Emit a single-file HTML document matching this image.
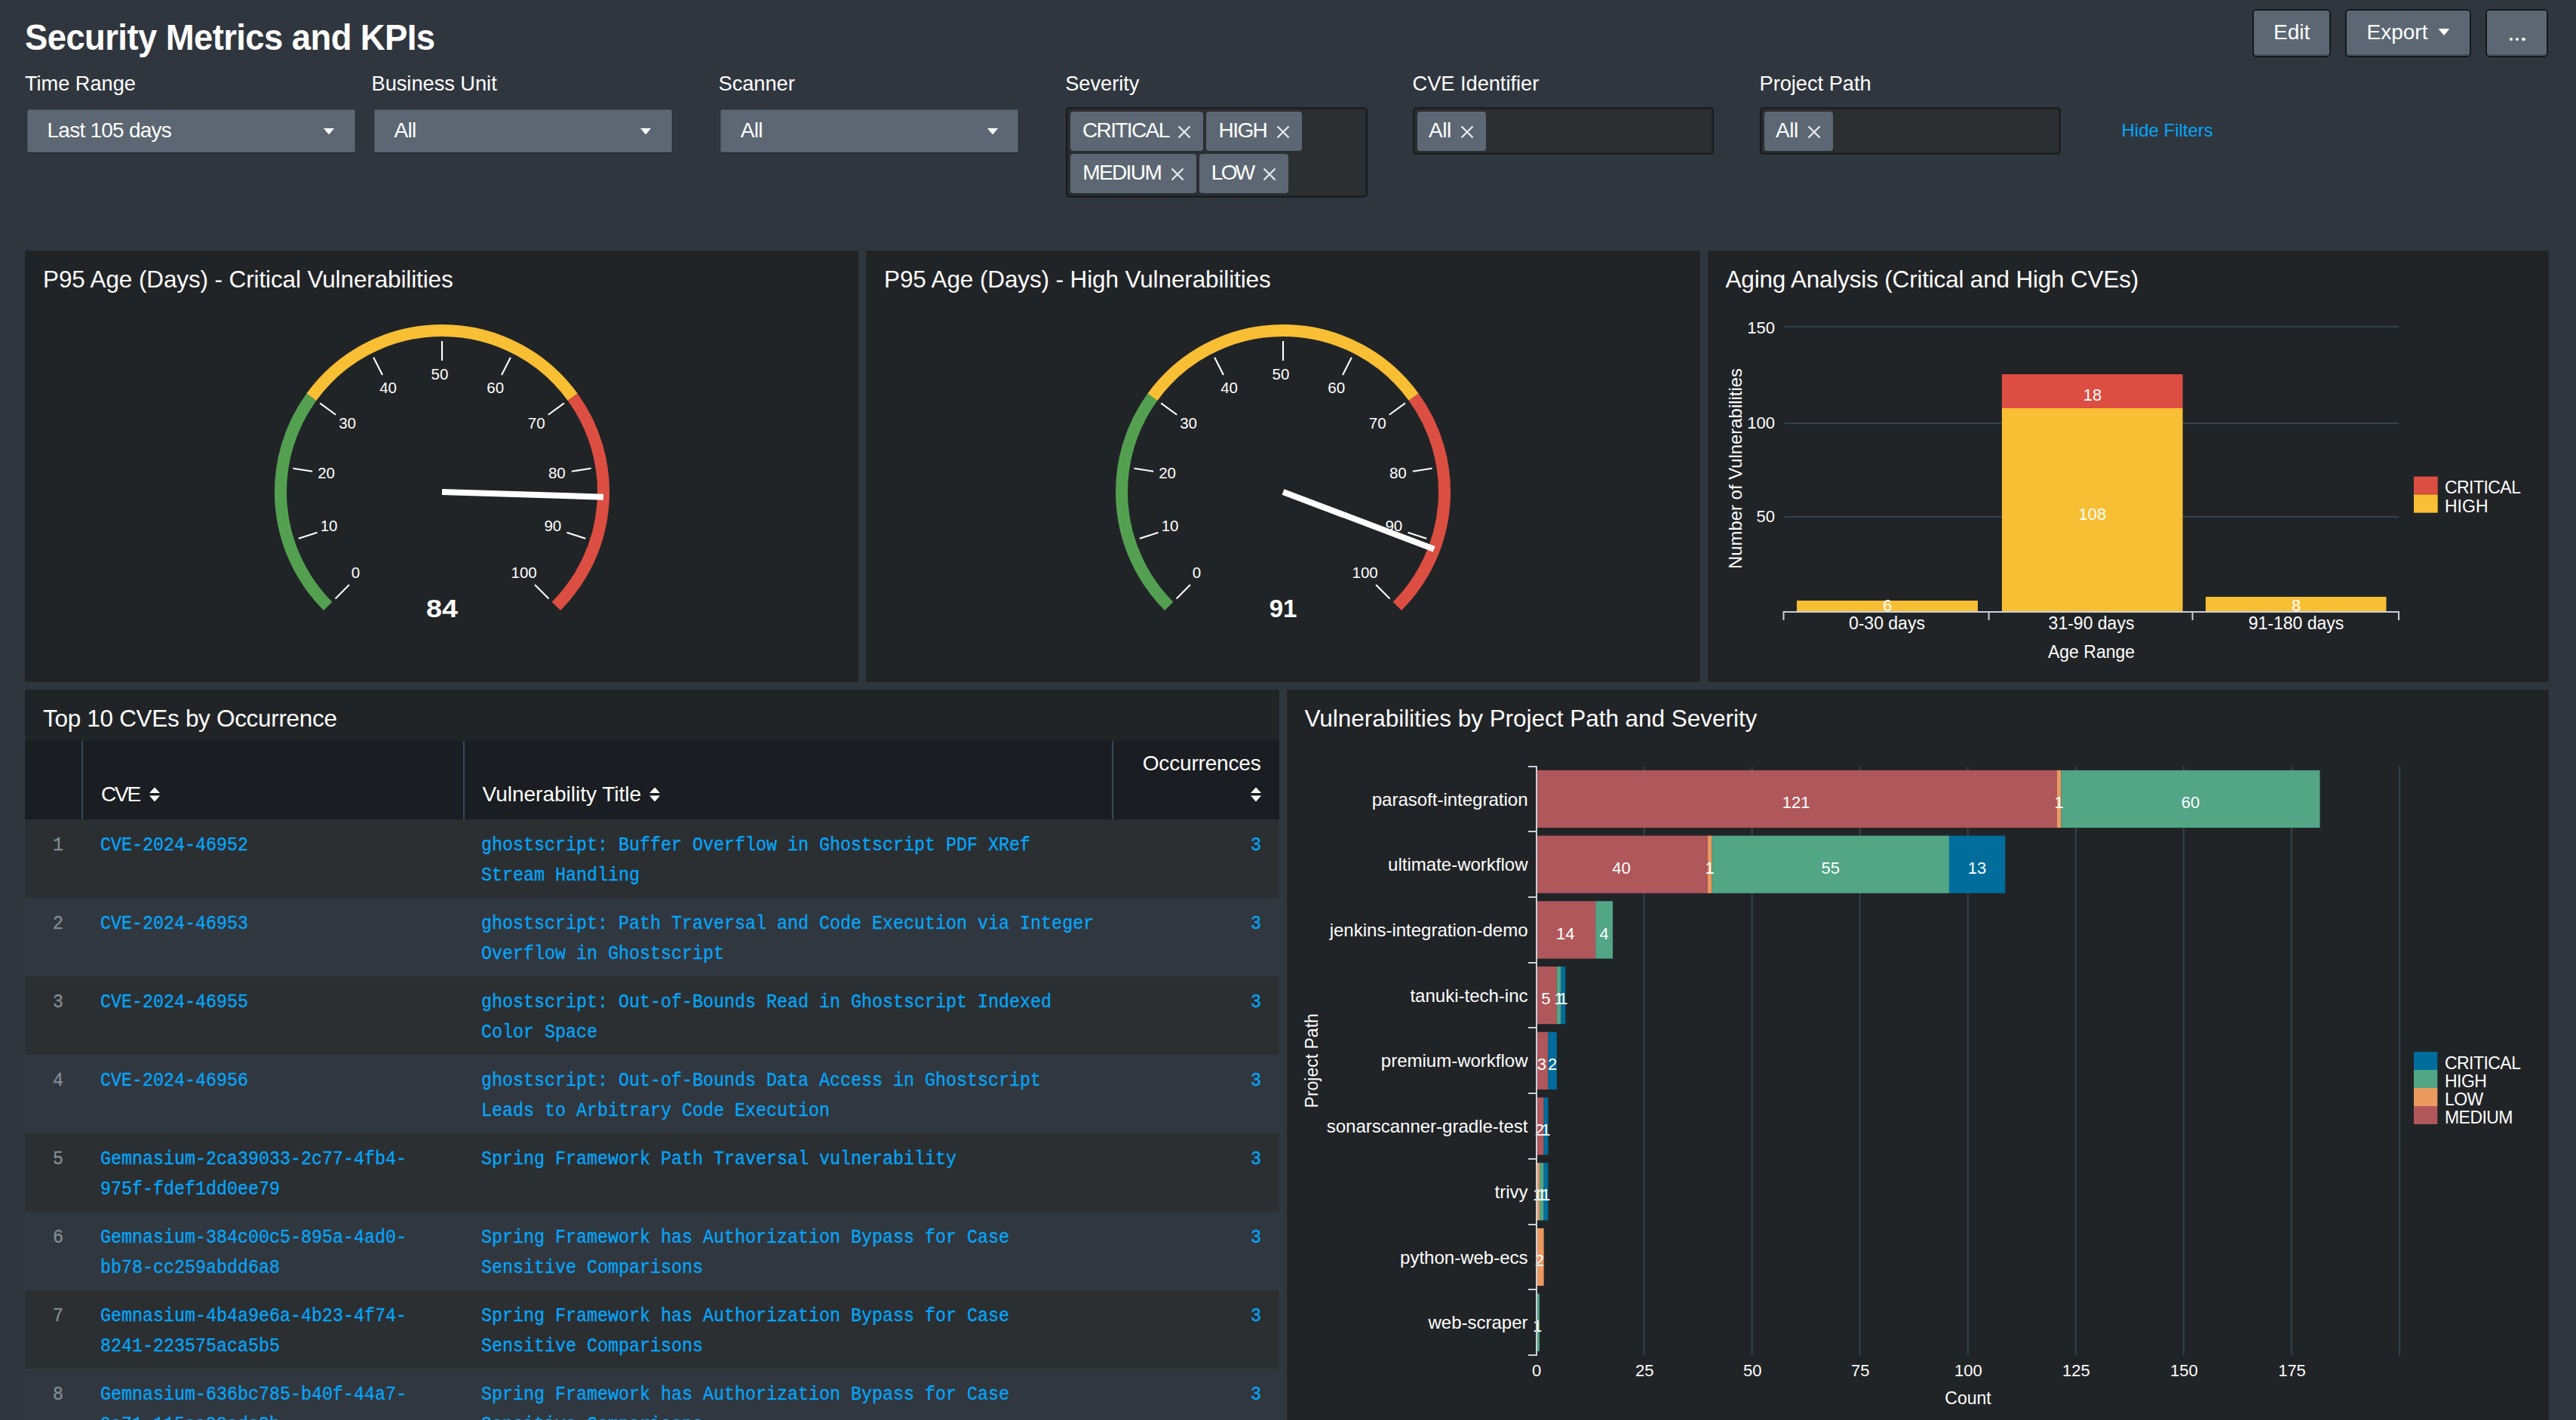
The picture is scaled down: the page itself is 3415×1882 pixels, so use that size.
<!DOCTYPE html>
<html><head><meta charset="utf-8"><title>Security Metrics and KPIs</title>
<style>
html,body{margin:0;padding:0;}
body{width:3415px;height:1882px;overflow:hidden;background:#30363e;position:relative;font-family:'Liberation Sans', sans-serif;}
</style></head><body>
<div style="position:absolute;left:32.50px;top:25.96px;font-family:'Liberation Sans', sans-serif;font-size:48px;line-height:48px;font-weight:700;color:#ffffff;letter-spacing:-0.6px;white-space:nowrap;transform:scaleX(0.946);transform-origin:0 0;">Security Metrics and KPIs</div><div style="position:absolute;left:2986.00px;top:12.00px;width:104.00px;height:63.50px;background:#5c6773;border-radius:5px;box-shadow:inset 0 0 0 2px #16191d, inset 0 -4px 0 0 #474e57;"></div><div style="position:absolute;left:3038.20px;top:28.59px;font-family:'Liberation Sans', sans-serif;font-size:28px;line-height:28px;font-weight:400;color:#ffffff;letter-spacing:0px;white-space:nowrap;transform:translateX(-50%) scaleX(1.0);transform-origin:0 0;">Edit</div><div style="position:absolute;left:3108.60px;top:12.00px;width:167.40px;height:63.50px;background:#5c6773;border-radius:5px;box-shadow:inset 0 0 0 2px #16191d, inset 0 -4px 0 0 #474e57;"></div><div style="position:absolute;left:3137.50px;top:28.59px;font-family:'Liberation Sans', sans-serif;font-size:28px;line-height:28px;font-weight:400;color:#ffffff;letter-spacing:0px;white-space:nowrap;">Export</div><svg style="position:absolute;left:3230px;top:36px" width="20" height="14"><path d="M2.6 2 L17.3 2 L10.7 10.3 Q9.95 11.2 9.2 10.3 Z" fill="#fff"/></svg><div style="position:absolute;left:3294.50px;top:12.00px;width:83.80px;height:63.50px;background:#5c6773;border-radius:5px;box-shadow:inset 0 0 0 2px #16191d, inset 0 -4px 0 0 #474e57;"></div><div style="position:absolute;left:3326.50px;top:49.8px;width:4.6px;height:4.6px;border-radius:50%;background:#fff"></div><div style="position:absolute;left:3334.80px;top:49.8px;width:4.6px;height:4.6px;border-radius:50%;background:#fff"></div><div style="position:absolute;left:3343.20px;top:49.8px;width:4.6px;height:4.6px;border-radius:50%;background:#fff"></div><div style="position:absolute;left:32.90px;top:97.27px;font-family:'Liberation Sans', sans-serif;font-size:27.2px;line-height:27.2px;font-weight:400;color:#ffffff;letter-spacing:0px;white-space:nowrap;">Time Range</div><div style="position:absolute;left:492.50px;top:97.27px;font-family:'Liberation Sans', sans-serif;font-size:27.2px;line-height:27.2px;font-weight:400;color:#ffffff;letter-spacing:0px;white-space:nowrap;">Business Unit</div><div style="position:absolute;left:952.50px;top:97.27px;font-family:'Liberation Sans', sans-serif;font-size:27.2px;line-height:27.2px;font-weight:400;color:#ffffff;letter-spacing:0px;white-space:nowrap;">Scanner</div><div style="position:absolute;left:1412.20px;top:97.27px;font-family:'Liberation Sans', sans-serif;font-size:27.2px;line-height:27.2px;font-weight:400;color:#ffffff;letter-spacing:0px;white-space:nowrap;">Severity</div><div style="position:absolute;left:1872.50px;top:97.27px;font-family:'Liberation Sans', sans-serif;font-size:27.2px;line-height:27.2px;font-weight:400;color:#ffffff;letter-spacing:0px;white-space:nowrap;">CVE Identifier</div><div style="position:absolute;left:2332.50px;top:97.27px;font-family:'Liberation Sans', sans-serif;font-size:27.2px;line-height:27.2px;font-weight:400;color:#ffffff;letter-spacing:0px;white-space:nowrap;">Project Path</div><div style="position:absolute;left:35.00px;top:144.00px;width:436.50px;height:60.00px;background:#5c6773;border-radius:4px;box-shadow:inset 0 0 0 1.3px #2b3036, inset 0 -2.2px 0 0 #2b3036;"></div><div style="position:absolute;left:62.50px;top:158.89px;font-family:'Liberation Sans', sans-serif;font-size:28px;line-height:28px;font-weight:400;color:#ffffff;letter-spacing:-0.75px;white-space:nowrap;">Last 105 days</div><svg style="position:absolute;left:426.50px;top:168px" width="18" height="13"><path d="M2 2 L16 2 L9.8 9.6 Q9 10.5 8.2 9.6 Z" fill="#fff"/></svg><div style="position:absolute;left:495.00px;top:144.00px;width:396.70px;height:60.00px;background:#5c6773;border-radius:4px;box-shadow:inset 0 0 0 1.3px #2b3036, inset 0 -2.2px 0 0 #2b3036;"></div><div style="position:absolute;left:522.50px;top:158.89px;font-family:'Liberation Sans', sans-serif;font-size:28px;line-height:28px;font-weight:400;color:#ffffff;letter-spacing:-0.75px;white-space:nowrap;">All</div><svg style="position:absolute;left:846.70px;top:168px" width="18" height="13"><path d="M2 2 L16 2 L9.8 9.6 Q9 10.5 8.2 9.6 Z" fill="#fff"/></svg><div style="position:absolute;left:954.30px;top:144.00px;width:397.20px;height:60.00px;background:#5c6773;border-radius:4px;box-shadow:inset 0 0 0 1.3px #2b3036, inset 0 -2.2px 0 0 #2b3036;"></div><div style="position:absolute;left:981.80px;top:158.89px;font-family:'Liberation Sans', sans-serif;font-size:28px;line-height:28px;font-weight:400;color:#ffffff;letter-spacing:-0.75px;white-space:nowrap;">All</div><svg style="position:absolute;left:1306.50px;top:168px" width="18" height="13"><path d="M2 2 L16 2 L9.8 9.6 Q9 10.5 8.2 9.6 Z" fill="#fff"/></svg><div style="position:absolute;left:1413.20px;top:142.40px;width:400.10px;height:119.60px;background:#2b2f32;border-radius:5px;box-shadow:0 0 0 2.5px #1a1d20 inset;"></div><div style="position:absolute;left:1419.00px;top:148.10px;width:176.00px;height:51.60px;background:#5c6773;border-radius:4px;"></div><div style="position:absolute;left:1434.90px;top:158.59px;font-family:'Liberation Sans', sans-serif;font-size:28px;line-height:28px;font-weight:400;color:#ffffff;letter-spacing:-1.6px;white-space:nowrap;">CRITICAL</div><svg style="position:absolute;left:1561.40px;top:165.90px" width="18" height="18"><path d="M1.5 1.5 L16.5 16.5 M16.5 1.5 L1.5 16.5" stroke="#e3e7ea" stroke-width="2.4"/></svg><div style="position:absolute;left:1599.00px;top:148.10px;width:126.70px;height:51.60px;background:#5c6773;border-radius:4px;"></div><div style="position:absolute;left:1615.60px;top:158.59px;font-family:'Liberation Sans', sans-serif;font-size:28px;line-height:28px;font-weight:400;color:#ffffff;letter-spacing:-1.6px;white-space:nowrap;">HIGH</div><svg style="position:absolute;left:1692.00px;top:165.90px" width="18" height="18"><path d="M1.5 1.5 L16.5 16.5 M16.5 1.5 L1.5 16.5" stroke="#e3e7ea" stroke-width="2.4"/></svg><div style="position:absolute;left:1419.00px;top:204.10px;width:166.80px;height:51.60px;background:#5c6773;border-radius:4px;"></div><div style="position:absolute;left:1435.20px;top:214.59px;font-family:'Liberation Sans', sans-serif;font-size:28px;line-height:28px;font-weight:400;color:#ffffff;letter-spacing:-1.6px;white-space:nowrap;">MEDIUM</div><svg style="position:absolute;left:1552.40px;top:221.90px" width="18" height="18"><path d="M1.5 1.5 L16.5 16.5 M16.5 1.5 L1.5 16.5" stroke="#e3e7ea" stroke-width="2.4"/></svg><div style="position:absolute;left:1590.00px;top:204.10px;width:118.00px;height:51.60px;background:#5c6773;border-radius:4px;"></div><div style="position:absolute;left:1605.70px;top:214.59px;font-family:'Liberation Sans', sans-serif;font-size:28px;line-height:28px;font-weight:400;color:#ffffff;letter-spacing:-2.6px;white-space:nowrap;">LOW</div><svg style="position:absolute;left:1674.00px;top:221.90px" width="18" height="18"><path d="M1.5 1.5 L16.5 16.5 M16.5 1.5 L1.5 16.5" stroke="#e3e7ea" stroke-width="2.4"/></svg><div style="position:absolute;left:1873.20px;top:142.40px;width:399.30px;height:62.90px;background:#2b2f32;border-radius:5px;box-shadow:0 0 0 2.5px #1a1d20 inset;"></div><div style="position:absolute;left:1879.00px;top:148.10px;width:90.80px;height:51.60px;background:#5c6773;border-radius:4px;"></div><div style="position:absolute;left:1894.00px;top:158.59px;font-family:'Liberation Sans', sans-serif;font-size:28px;line-height:28px;font-weight:400;color:#ffffff;letter-spacing:-0.5px;white-space:nowrap;">All</div><svg style="position:absolute;left:1936.00px;top:165.90px" width="18" height="18"><path d="M1.5 1.5 L16.5 16.5 M16.5 1.5 L1.5 16.5" stroke="#e3e7ea" stroke-width="2.4"/></svg><div style="position:absolute;left:2333.20px;top:142.40px;width:399.30px;height:62.90px;background:#2b2f32;border-radius:5px;box-shadow:0 0 0 2.5px #1a1d20 inset;"></div><div style="position:absolute;left:2339.00px;top:148.10px;width:90.80px;height:51.60px;background:#5c6773;border-radius:4px;"></div><div style="position:absolute;left:2354.00px;top:158.59px;font-family:'Liberation Sans', sans-serif;font-size:28px;line-height:28px;font-weight:400;color:#ffffff;letter-spacing:-0.5px;white-space:nowrap;">All</div><svg style="position:absolute;left:2396.00px;top:165.90px" width="18" height="18"><path d="M1.5 1.5 L16.5 16.5 M16.5 1.5 L1.5 16.5" stroke="#e3e7ea" stroke-width="2.4"/></svg><div style="position:absolute;left:2812.50px;top:160.88px;font-family:'Liberation Sans', sans-serif;font-size:24px;line-height:24px;font-weight:400;color:#04a5fb;letter-spacing:0px;white-space:nowrap;">Hide Filters</div><div style="position:absolute;left:33.00px;top:332.00px;width:1105.00px;height:572.00px;background:#212427;border-radius:0px;box-shadow:0 0 0 1px #33393f;"></div><div style="position:absolute;left:1148.00px;top:332.00px;width:1106.00px;height:572.00px;background:#212427;border-radius:0px;box-shadow:0 0 0 1px #33393f;"></div><div style="position:absolute;left:2264.00px;top:332.00px;width:1115.00px;height:572.00px;background:#212427;border-radius:0px;box-shadow:0 0 0 1px #33393f;"></div><div style="position:absolute;left:33.00px;top:914.00px;width:1663.00px;height:986.00px;background:#212427;border-radius:0px;box-shadow:0 0 0 1px #33393f;"></div><div style="position:absolute;left:1706.00px;top:914.00px;width:1673.00px;height:986.00px;background:#212427;border-radius:0px;box-shadow:0 0 0 1px #33393f;"></div><div style="position:absolute;left:57.00px;top:354.83px;font-family:'Liberation Sans', sans-serif;font-size:31.5px;line-height:31.5px;font-weight:400;color:#ffffff;letter-spacing:-0.12px;white-space:nowrap;">P95 Age (Days) - Critical Vulnerabilities</div><div style="position:absolute;left:1172.00px;top:354.83px;font-family:'Liberation Sans', sans-serif;font-size:31.5px;line-height:31.5px;font-weight:400;color:#ffffff;letter-spacing:-0.12px;white-space:nowrap;">P95 Age (Days) - High Vulnerabilities</div><div style="position:absolute;left:2287.50px;top:354.83px;font-family:'Liberation Sans', sans-serif;font-size:31.5px;line-height:31.5px;font-weight:400;color:#ffffff;letter-spacing:-0.19px;white-space:nowrap;">Aging Analysis (Critical and High CVEs)</div><div style="position:absolute;left:57.00px;top:936.73px;font-family:'Liberation Sans', sans-serif;font-size:31.5px;line-height:31.5px;font-weight:400;color:#ffffff;letter-spacing:-0.31px;white-space:nowrap;">Top 10 CVEs by Occurrence</div><div style="position:absolute;left:1729.50px;top:937.33px;font-family:'Liberation Sans', sans-serif;font-size:31.5px;line-height:31.5px;font-weight:400;color:#ffffff;letter-spacing:-0.03px;white-space:nowrap;">Vulnerabilities by Project Path and Severity</div><svg style="position:absolute;left:286.00px;top:392.00px" width="600" height="480"><path d="M148.68 411.32 A214 214 0 0 1 126.87 134.21" stroke="#53a051" stroke-width="16" fill="none"/><path d="M126.87 134.21 A214 214 0 0 1 473.13 134.21" stroke="#f8be34" stroke-width="16" fill="none"/><path d="M473.13 134.21 A214 214 0 0 1 451.32 411.32" stroke="#dc4e41" stroke-width="16" fill="none"/><line x1="176.96" y1="383.04" x2="158.58" y2="401.42" stroke="#fff" stroke-width="2.1"/><text x="185.40" y="374.10" font-family="'Liberation Sans', sans-serif" font-size="20.5" fill="#fff" text-anchor="middle">0</text><line x1="134.52" y1="313.77" x2="109.79" y2="321.80" stroke="#fff" stroke-width="2.1"/><text x="150.09" y="312.30" font-family="'Liberation Sans', sans-serif" font-size="20.5" fill="#fff" text-anchor="middle">10</text><line x1="128.14" y1="232.78" x2="102.46" y2="228.71" stroke="#fff" stroke-width="2.1"/><text x="146.61" y="242.35" font-family="'Liberation Sans', sans-serif" font-size="20.5" fill="#fff" text-anchor="middle">20</text><line x1="159.23" y1="157.73" x2="138.20" y2="142.44" stroke="#fff" stroke-width="2.1"/><text x="174.60" y="176.39" font-family="'Liberation Sans', sans-serif" font-size="20.5" fill="#fff" text-anchor="middle">30</text><line x1="221.01" y1="104.96" x2="209.20" y2="81.80" stroke="#fff" stroke-width="2.1"/><text x="228.63" y="128.69" font-family="'Liberation Sans', sans-serif" font-size="20.5" fill="#fff" text-anchor="middle">40</text><line x1="300.00" y1="86.00" x2="300.00" y2="60.00" stroke="#fff" stroke-width="2.1"/><text x="297.00" y="110.80" font-family="'Liberation Sans', sans-serif" font-size="20.5" fill="#fff" text-anchor="middle">50</text><line x1="378.99" y1="104.96" x2="390.80" y2="81.80" stroke="#fff" stroke-width="2.1"/><text x="370.67" y="128.69" font-family="'Liberation Sans', sans-serif" font-size="20.5" fill="#fff" text-anchor="middle">60</text><line x1="440.77" y1="157.73" x2="461.80" y2="142.44" stroke="#fff" stroke-width="2.1"/><text x="425.20" y="176.39" font-family="'Liberation Sans', sans-serif" font-size="20.5" fill="#fff" text-anchor="middle">70</text><line x1="471.86" y1="232.78" x2="497.54" y2="228.71" stroke="#fff" stroke-width="2.1"/><text x="452.39" y="242.35" font-family="'Liberation Sans', sans-serif" font-size="20.5" fill="#fff" text-anchor="middle">80</text><line x1="465.48" y1="313.77" x2="490.21" y2="321.80" stroke="#fff" stroke-width="2.1"/><text x="446.81" y="312.30" font-family="'Liberation Sans', sans-serif" font-size="20.5" fill="#fff" text-anchor="middle">90</text><line x1="423.04" y1="383.04" x2="441.42" y2="401.42" stroke="#fff" stroke-width="2.1"/><text x="408.60" y="374.10" font-family="'Liberation Sans', sans-serif" font-size="20.5" fill="#fff" text-anchor="middle">100</text><rect x="300.00" y="256.00" width="214" height="8" fill="#fff" transform="rotate(1.800 300.0 260)"/><text x="0" y="0" transform="translate(300.00,425.70) scale(1.14,1)" font-family="'Liberation Sans', sans-serif" font-size="33" font-weight="700" fill="#fff" text-anchor="middle">84</text></svg><svg style="position:absolute;left:1401.00px;top:392.00px" width="600" height="480"><path d="M148.68 411.32 A214 214 0 0 1 126.87 134.21" stroke="#53a051" stroke-width="16" fill="none"/><path d="M126.87 134.21 A214 214 0 0 1 473.13 134.21" stroke="#f8be34" stroke-width="16" fill="none"/><path d="M473.13 134.21 A214 214 0 0 1 451.32 411.32" stroke="#dc4e41" stroke-width="16" fill="none"/><line x1="176.96" y1="383.04" x2="158.58" y2="401.42" stroke="#fff" stroke-width="2.1"/><text x="185.40" y="374.10" font-family="'Liberation Sans', sans-serif" font-size="20.5" fill="#fff" text-anchor="middle">0</text><line x1="134.52" y1="313.77" x2="109.79" y2="321.80" stroke="#fff" stroke-width="2.1"/><text x="150.09" y="312.30" font-family="'Liberation Sans', sans-serif" font-size="20.5" fill="#fff" text-anchor="middle">10</text><line x1="128.14" y1="232.78" x2="102.46" y2="228.71" stroke="#fff" stroke-width="2.1"/><text x="146.61" y="242.35" font-family="'Liberation Sans', sans-serif" font-size="20.5" fill="#fff" text-anchor="middle">20</text><line x1="159.23" y1="157.73" x2="138.20" y2="142.44" stroke="#fff" stroke-width="2.1"/><text x="174.60" y="176.39" font-family="'Liberation Sans', sans-serif" font-size="20.5" fill="#fff" text-anchor="middle">30</text><line x1="221.01" y1="104.96" x2="209.20" y2="81.80" stroke="#fff" stroke-width="2.1"/><text x="228.63" y="128.69" font-family="'Liberation Sans', sans-serif" font-size="20.5" fill="#fff" text-anchor="middle">40</text><line x1="300.00" y1="86.00" x2="300.00" y2="60.00" stroke="#fff" stroke-width="2.1"/><text x="297.00" y="110.80" font-family="'Liberation Sans', sans-serif" font-size="20.5" fill="#fff" text-anchor="middle">50</text><line x1="378.99" y1="104.96" x2="390.80" y2="81.80" stroke="#fff" stroke-width="2.1"/><text x="370.67" y="128.69" font-family="'Liberation Sans', sans-serif" font-size="20.5" fill="#fff" text-anchor="middle">60</text><line x1="440.77" y1="157.73" x2="461.80" y2="142.44" stroke="#fff" stroke-width="2.1"/><text x="425.20" y="176.39" font-family="'Liberation Sans', sans-serif" font-size="20.5" fill="#fff" text-anchor="middle">70</text><line x1="471.86" y1="232.78" x2="497.54" y2="228.71" stroke="#fff" stroke-width="2.1"/><text x="452.39" y="242.35" font-family="'Liberation Sans', sans-serif" font-size="20.5" fill="#fff" text-anchor="middle">80</text><line x1="465.48" y1="313.77" x2="490.21" y2="321.80" stroke="#fff" stroke-width="2.1"/><text x="446.81" y="312.30" font-family="'Liberation Sans', sans-serif" font-size="20.5" fill="#fff" text-anchor="middle">90</text><line x1="423.04" y1="383.04" x2="441.42" y2="401.42" stroke="#fff" stroke-width="2.1"/><text x="408.60" y="374.10" font-family="'Liberation Sans', sans-serif" font-size="20.5" fill="#fff" text-anchor="middle">100</text><rect x="300.00" y="256.00" width="214" height="8" fill="#fff" transform="rotate(20.700 300.0 260)"/><text x="0" y="0" transform="translate(300.00,425.70) scale(1.0,1)" font-family="'Liberation Sans', sans-serif" font-size="33" font-weight="700" fill="#fff" text-anchor="middle">91</text></svg><svg style="position:absolute;left:2264px;top:332px" width="1115" height="572"><rect x="102" y="100" width="814" height="2" fill="#33434a"/><rect x="102" y="228" width="814" height="2" fill="#33434a"/><rect x="102" y="352" width="814" height="2" fill="#33434a"/><rect x="118.00" y="464.00" width="240.00" height="15.00" fill="#f8be34"/><rect x="389.90" y="209.00" width="239.70" height="270.00" fill="#f8be34"/><rect x="389.90" y="164.00" width="239.70" height="45.00" fill="#dc4e41"/><rect x="660.00" y="459.00" width="239.50" height="20.00" fill="#f8be34"/><rect x="100" y="478" width="817" height="2" fill="#c9d0d7"/><rect x="99.50" y="478" width="2" height="12" fill="#c9d0d7"/><rect x="371.60" y="478" width="2" height="12" fill="#c9d0d7"/><rect x="641.60" y="478" width="2" height="12" fill="#c9d0d7"/><rect x="915.00" y="478" width="2" height="12" fill="#c9d0d7"/><text x="238.00" y="477.60" font-family="'Liberation Sans', sans-serif" font-size="22" fill="#fff" text-anchor="middle" >6</text><text x="509.90" y="198.70" font-family="'Liberation Sans', sans-serif" font-size="22" fill="#fff" text-anchor="middle" >18</text><text x="509.90" y="356.60" font-family="'Liberation Sans', sans-serif" font-size="22" fill="#fff" text-anchor="middle" >108</text><text x="780.00" y="477.60" font-family="'Liberation Sans', sans-serif" font-size="22" fill="#fff" text-anchor="middle" >8</text><text x="89.00" y="110.00" font-family="'Liberation Sans', sans-serif" font-size="22" fill="#fff" text-anchor="end" >150</text><text x="89.00" y="236.10" font-family="'Liberation Sans', sans-serif" font-size="22" fill="#fff" text-anchor="end" >100</text><text x="89.00" y="360.30" font-family="'Liberation Sans', sans-serif" font-size="22" fill="#fff" text-anchor="end" >50</text><text x="237.40" y="502.30" font-family="'Liberation Sans', sans-serif" font-size="23" fill="#fff" text-anchor="middle" >0-30 days</text><text x="508.50" y="502.30" font-family="'Liberation Sans', sans-serif" font-size="23" fill="#fff" text-anchor="middle" >31-90 days</text><text x="780.00" y="502.30" font-family="'Liberation Sans', sans-serif" font-size="23" fill="#fff" text-anchor="middle" >91-180 days</text><text x="508.50" y="540.40" font-family="'Liberation Sans', sans-serif" font-size="23" fill="#fff" text-anchor="middle" >Age Range</text><text x="0" y="0" font-family="'Liberation Sans', sans-serif" font-size="23.9" fill="#fff" text-anchor="middle" transform="translate(45,289) rotate(-90)">Number of Vulnerabilities</text><rect x="936" y="299.60" width="31.7" height="23.8" fill="#dc4e41"/><rect x="936" y="323.40" width="31.7" height="24.2" fill="#f8be34"/><text x="977.00" y="322.00" font-family="'Liberation Sans', sans-serif" font-size="23" fill="#fff" text-anchor="start" letter-spacing="-0.55">CRITICAL</text><text x="977.00" y="346.70" font-family="'Liberation Sans', sans-serif" font-size="23" fill="#fff" text-anchor="start" >HIGH</text></svg><div style="position:absolute;left:33.00px;top:982.00px;width:1663.00px;height:104.00px;background:#1a1d21;border-radius:0px;"></div><div style="position:absolute;left:107.80px;top:982.00px;width:2.00px;height:104.00px;background:#3a4855;border-radius:0px;"></div><div style="position:absolute;left:613.90px;top:982.00px;width:2.00px;height:104.00px;background:#3a4855;border-radius:0px;"></div><div style="position:absolute;left:1474.10px;top:982.00px;width:2.00px;height:104.00px;background:#3a4855;border-radius:0px;"></div><div style="position:absolute;left:134.00px;top:1038.79px;font-family:'Liberation Sans', sans-serif;font-size:28px;line-height:28px;font-weight:400;color:#ffffff;letter-spacing:-2.2px;white-space:nowrap;">CVE</div><svg style="position:absolute;left:196.50px;top:1042.50px" width="16" height="21"><path d="M8 0.5 L15 8 L1 8 Z M1 11.5 L15 11.5 L8 19.5 Z" fill="#fff"/></svg><div style="position:absolute;left:639.50px;top:1038.79px;font-family:'Liberation Sans', sans-serif;font-size:28px;line-height:28px;font-weight:400;color:#ffffff;letter-spacing:0px;white-space:nowrap;">Vulnerability Title</div><svg style="position:absolute;left:859.50px;top:1042.50px" width="16" height="21"><path d="M8 0.5 L15 8 L1 8 Z M1 11.5 L15 11.5 L8 19.5 Z" fill="#fff"/></svg><div style="position:absolute;right:1743.50px;top:998.29px;font-family:'Liberation Sans', sans-serif;font-size:28px;line-height:28px;font-weight:400;color:#ffffff;letter-spacing:-0.18px;white-space:nowrap;">Occurrences</div><svg style="position:absolute;left:1657.00px;top:1042.80px" width="16" height="21"><path d="M8 0.5 L15 8 L1 8 Z M1 11.5 L15 11.5 L8 19.5 Z" fill="#fff"/></svg><div style="position:absolute;left:33.00px;top:1086.00px;width:1663.00px;height:104.00px;background:#2b2f31;border-radius:0px;"></div><div style="position:absolute;right:3331.00px;top:1106.70px;font-family:'Liberation Mono', monospace;font-size:26.5px;line-height:26.5px;font-weight:400;color:#838c96;letter-spacing:0px;white-space:nowrap;transform:scaleX(0.8805031446540881);transform-origin:100% 0;-webkit-text-stroke:0.35px currentColor;">1</div><div style="position:absolute;left:132.50px;top:1106.70px;font-family:'Liberation Mono', monospace;font-size:26.5px;line-height:26.5px;font-weight:400;color:#04a5fb;letter-spacing:0px;white-space:nowrap;transform:scaleX(0.8805031446540881);transform-origin:0 0;-webkit-text-stroke:0.35px currentColor;">CVE-2024-46952</div><div style="position:absolute;left:638.30px;top:1106.70px;font-family:'Liberation Mono', monospace;font-size:26.5px;line-height:26.5px;font-weight:400;color:#04a5fb;letter-spacing:0px;white-space:nowrap;transform:scaleX(0.8805031446540881);transform-origin:0 0;-webkit-text-stroke:0.35px currentColor;">ghostscript: Buffer Overflow in Ghostscript PDF XRef</div><div style="position:absolute;left:638.30px;top:1146.70px;font-family:'Liberation Mono', monospace;font-size:26.5px;line-height:26.5px;font-weight:400;color:#04a5fb;letter-spacing:0px;white-space:nowrap;transform:scaleX(0.8805031446540881);transform-origin:0 0;-webkit-text-stroke:0.35px currentColor;">Stream Handling</div><div style="position:absolute;right:1743.50px;top:1106.70px;font-family:'Liberation Mono', monospace;font-size:26.5px;line-height:26.5px;font-weight:400;color:#04a5fb;letter-spacing:0px;white-space:nowrap;transform:scaleX(0.8805031446540881);transform-origin:100% 0;-webkit-text-stroke:0.35px currentColor;">3</div><div style="position:absolute;left:33.00px;top:1190.00px;width:1663.00px;height:104.00px;background:#31373e;border-radius:0px;"></div><div style="position:absolute;right:3331.00px;top:1210.70px;font-family:'Liberation Mono', monospace;font-size:26.5px;line-height:26.5px;font-weight:400;color:#838c96;letter-spacing:0px;white-space:nowrap;transform:scaleX(0.8805031446540881);transform-origin:100% 0;-webkit-text-stroke:0.35px currentColor;">2</div><div style="position:absolute;left:132.50px;top:1210.70px;font-family:'Liberation Mono', monospace;font-size:26.5px;line-height:26.5px;font-weight:400;color:#04a5fb;letter-spacing:0px;white-space:nowrap;transform:scaleX(0.8805031446540881);transform-origin:0 0;-webkit-text-stroke:0.35px currentColor;">CVE-2024-46953</div><div style="position:absolute;left:638.30px;top:1210.70px;font-family:'Liberation Mono', monospace;font-size:26.5px;line-height:26.5px;font-weight:400;color:#04a5fb;letter-spacing:0px;white-space:nowrap;transform:scaleX(0.8805031446540881);transform-origin:0 0;-webkit-text-stroke:0.35px currentColor;">ghostscript: Path Traversal and Code Execution via Integer</div><div style="position:absolute;left:638.30px;top:1250.70px;font-family:'Liberation Mono', monospace;font-size:26.5px;line-height:26.5px;font-weight:400;color:#04a5fb;letter-spacing:0px;white-space:nowrap;transform:scaleX(0.8805031446540881);transform-origin:0 0;-webkit-text-stroke:0.35px currentColor;">Overflow in Ghostscript</div><div style="position:absolute;right:1743.50px;top:1210.70px;font-family:'Liberation Mono', monospace;font-size:26.5px;line-height:26.5px;font-weight:400;color:#04a5fb;letter-spacing:0px;white-space:nowrap;transform:scaleX(0.8805031446540881);transform-origin:100% 0;-webkit-text-stroke:0.35px currentColor;">3</div><div style="position:absolute;left:33.00px;top:1294.00px;width:1663.00px;height:104.00px;background:#2b2f31;border-radius:0px;"></div><div style="position:absolute;right:3331.00px;top:1314.70px;font-family:'Liberation Mono', monospace;font-size:26.5px;line-height:26.5px;font-weight:400;color:#838c96;letter-spacing:0px;white-space:nowrap;transform:scaleX(0.8805031446540881);transform-origin:100% 0;-webkit-text-stroke:0.35px currentColor;">3</div><div style="position:absolute;left:132.50px;top:1314.70px;font-family:'Liberation Mono', monospace;font-size:26.5px;line-height:26.5px;font-weight:400;color:#04a5fb;letter-spacing:0px;white-space:nowrap;transform:scaleX(0.8805031446540881);transform-origin:0 0;-webkit-text-stroke:0.35px currentColor;">CVE-2024-46955</div><div style="position:absolute;left:638.30px;top:1314.70px;font-family:'Liberation Mono', monospace;font-size:26.5px;line-height:26.5px;font-weight:400;color:#04a5fb;letter-spacing:0px;white-space:nowrap;transform:scaleX(0.8805031446540881);transform-origin:0 0;-webkit-text-stroke:0.35px currentColor;">ghostscript: Out-of-Bounds Read in Ghostscript Indexed</div><div style="position:absolute;left:638.30px;top:1354.70px;font-family:'Liberation Mono', monospace;font-size:26.5px;line-height:26.5px;font-weight:400;color:#04a5fb;letter-spacing:0px;white-space:nowrap;transform:scaleX(0.8805031446540881);transform-origin:0 0;-webkit-text-stroke:0.35px currentColor;">Color Space</div><div style="position:absolute;right:1743.50px;top:1314.70px;font-family:'Liberation Mono', monospace;font-size:26.5px;line-height:26.5px;font-weight:400;color:#04a5fb;letter-spacing:0px;white-space:nowrap;transform:scaleX(0.8805031446540881);transform-origin:100% 0;-webkit-text-stroke:0.35px currentColor;">3</div><div style="position:absolute;left:33.00px;top:1398.00px;width:1663.00px;height:104.00px;background:#31373e;border-radius:0px;"></div><div style="position:absolute;right:3331.00px;top:1418.70px;font-family:'Liberation Mono', monospace;font-size:26.5px;line-height:26.5px;font-weight:400;color:#838c96;letter-spacing:0px;white-space:nowrap;transform:scaleX(0.8805031446540881);transform-origin:100% 0;-webkit-text-stroke:0.35px currentColor;">4</div><div style="position:absolute;left:132.50px;top:1418.70px;font-family:'Liberation Mono', monospace;font-size:26.5px;line-height:26.5px;font-weight:400;color:#04a5fb;letter-spacing:0px;white-space:nowrap;transform:scaleX(0.8805031446540881);transform-origin:0 0;-webkit-text-stroke:0.35px currentColor;">CVE-2024-46956</div><div style="position:absolute;left:638.30px;top:1418.70px;font-family:'Liberation Mono', monospace;font-size:26.5px;line-height:26.5px;font-weight:400;color:#04a5fb;letter-spacing:0px;white-space:nowrap;transform:scaleX(0.8805031446540881);transform-origin:0 0;-webkit-text-stroke:0.35px currentColor;">ghostscript: Out-of-Bounds Data Access in Ghostscript</div><div style="position:absolute;left:638.30px;top:1458.70px;font-family:'Liberation Mono', monospace;font-size:26.5px;line-height:26.5px;font-weight:400;color:#04a5fb;letter-spacing:0px;white-space:nowrap;transform:scaleX(0.8805031446540881);transform-origin:0 0;-webkit-text-stroke:0.35px currentColor;">Leads to Arbitrary Code Execution</div><div style="position:absolute;right:1743.50px;top:1418.70px;font-family:'Liberation Mono', monospace;font-size:26.5px;line-height:26.5px;font-weight:400;color:#04a5fb;letter-spacing:0px;white-space:nowrap;transform:scaleX(0.8805031446540881);transform-origin:100% 0;-webkit-text-stroke:0.35px currentColor;">3</div><div style="position:absolute;left:33.00px;top:1502.00px;width:1663.00px;height:104.00px;background:#2b2f31;border-radius:0px;"></div><div style="position:absolute;right:3331.00px;top:1522.70px;font-family:'Liberation Mono', monospace;font-size:26.5px;line-height:26.5px;font-weight:400;color:#838c96;letter-spacing:0px;white-space:nowrap;transform:scaleX(0.8805031446540881);transform-origin:100% 0;-webkit-text-stroke:0.35px currentColor;">5</div><div style="position:absolute;left:132.50px;top:1522.70px;font-family:'Liberation Mono', monospace;font-size:26.5px;line-height:26.5px;font-weight:400;color:#04a5fb;letter-spacing:0px;white-space:nowrap;transform:scaleX(0.8805031446540881);transform-origin:0 0;-webkit-text-stroke:0.35px currentColor;">Gemnasium-2ca39033-2c77-4fb4-</div><div style="position:absolute;left:132.50px;top:1562.70px;font-family:'Liberation Mono', monospace;font-size:26.5px;line-height:26.5px;font-weight:400;color:#04a5fb;letter-spacing:0px;white-space:nowrap;transform:scaleX(0.8805031446540881);transform-origin:0 0;-webkit-text-stroke:0.35px currentColor;">975f-fdef1dd0ee79</div><div style="position:absolute;left:638.30px;top:1522.70px;font-family:'Liberation Mono', monospace;font-size:26.5px;line-height:26.5px;font-weight:400;color:#04a5fb;letter-spacing:0px;white-space:nowrap;transform:scaleX(0.8805031446540881);transform-origin:0 0;-webkit-text-stroke:0.35px currentColor;">Spring Framework Path Traversal vulnerability</div><div style="position:absolute;right:1743.50px;top:1522.70px;font-family:'Liberation Mono', monospace;font-size:26.5px;line-height:26.5px;font-weight:400;color:#04a5fb;letter-spacing:0px;white-space:nowrap;transform:scaleX(0.8805031446540881);transform-origin:100% 0;-webkit-text-stroke:0.35px currentColor;">3</div><div style="position:absolute;left:33.00px;top:1606.00px;width:1663.00px;height:104.00px;background:#31373e;border-radius:0px;"></div><div style="position:absolute;right:3331.00px;top:1626.70px;font-family:'Liberation Mono', monospace;font-size:26.5px;line-height:26.5px;font-weight:400;color:#838c96;letter-spacing:0px;white-space:nowrap;transform:scaleX(0.8805031446540881);transform-origin:100% 0;-webkit-text-stroke:0.35px currentColor;">6</div><div style="position:absolute;left:132.50px;top:1626.70px;font-family:'Liberation Mono', monospace;font-size:26.5px;line-height:26.5px;font-weight:400;color:#04a5fb;letter-spacing:0px;white-space:nowrap;transform:scaleX(0.8805031446540881);transform-origin:0 0;-webkit-text-stroke:0.35px currentColor;">Gemnasium-384c00c5-895a-4ad0-</div><div style="position:absolute;left:132.50px;top:1666.70px;font-family:'Liberation Mono', monospace;font-size:26.5px;line-height:26.5px;font-weight:400;color:#04a5fb;letter-spacing:0px;white-space:nowrap;transform:scaleX(0.8805031446540881);transform-origin:0 0;-webkit-text-stroke:0.35px currentColor;">bb78-cc259abdd6a8</div><div style="position:absolute;left:638.30px;top:1626.70px;font-family:'Liberation Mono', monospace;font-size:26.5px;line-height:26.5px;font-weight:400;color:#04a5fb;letter-spacing:0px;white-space:nowrap;transform:scaleX(0.8805031446540881);transform-origin:0 0;-webkit-text-stroke:0.35px currentColor;">Spring Framework has Authorization Bypass for Case</div><div style="position:absolute;left:638.30px;top:1666.70px;font-family:'Liberation Mono', monospace;font-size:26.5px;line-height:26.5px;font-weight:400;color:#04a5fb;letter-spacing:0px;white-space:nowrap;transform:scaleX(0.8805031446540881);transform-origin:0 0;-webkit-text-stroke:0.35px currentColor;">Sensitive Comparisons</div><div style="position:absolute;right:1743.50px;top:1626.70px;font-family:'Liberation Mono', monospace;font-size:26.5px;line-height:26.5px;font-weight:400;color:#04a5fb;letter-spacing:0px;white-space:nowrap;transform:scaleX(0.8805031446540881);transform-origin:100% 0;-webkit-text-stroke:0.35px currentColor;">3</div><div style="position:absolute;left:33.00px;top:1710.00px;width:1663.00px;height:104.00px;background:#2b2f31;border-radius:0px;"></div><div style="position:absolute;right:3331.00px;top:1730.70px;font-family:'Liberation Mono', monospace;font-size:26.5px;line-height:26.5px;font-weight:400;color:#838c96;letter-spacing:0px;white-space:nowrap;transform:scaleX(0.8805031446540881);transform-origin:100% 0;-webkit-text-stroke:0.35px currentColor;">7</div><div style="position:absolute;left:132.50px;top:1730.70px;font-family:'Liberation Mono', monospace;font-size:26.5px;line-height:26.5px;font-weight:400;color:#04a5fb;letter-spacing:0px;white-space:nowrap;transform:scaleX(0.8805031446540881);transform-origin:0 0;-webkit-text-stroke:0.35px currentColor;">Gemnasium-4b4a9e6a-4b23-4f74-</div><div style="position:absolute;left:132.50px;top:1770.70px;font-family:'Liberation Mono', monospace;font-size:26.5px;line-height:26.5px;font-weight:400;color:#04a5fb;letter-spacing:0px;white-space:nowrap;transform:scaleX(0.8805031446540881);transform-origin:0 0;-webkit-text-stroke:0.35px currentColor;">8241-223575aca5b5</div><div style="position:absolute;left:638.30px;top:1730.70px;font-family:'Liberation Mono', monospace;font-size:26.5px;line-height:26.5px;font-weight:400;color:#04a5fb;letter-spacing:0px;white-space:nowrap;transform:scaleX(0.8805031446540881);transform-origin:0 0;-webkit-text-stroke:0.35px currentColor;">Spring Framework has Authorization Bypass for Case</div><div style="position:absolute;left:638.30px;top:1770.70px;font-family:'Liberation Mono', monospace;font-size:26.5px;line-height:26.5px;font-weight:400;color:#04a5fb;letter-spacing:0px;white-space:nowrap;transform:scaleX(0.8805031446540881);transform-origin:0 0;-webkit-text-stroke:0.35px currentColor;">Sensitive Comparisons</div><div style="position:absolute;right:1743.50px;top:1730.70px;font-family:'Liberation Mono', monospace;font-size:26.5px;line-height:26.5px;font-weight:400;color:#04a5fb;letter-spacing:0px;white-space:nowrap;transform:scaleX(0.8805031446540881);transform-origin:100% 0;-webkit-text-stroke:0.35px currentColor;">3</div><div style="position:absolute;left:33.00px;top:1814.00px;width:1663.00px;height:104.00px;background:#31373e;border-radius:0px;"></div><div style="position:absolute;right:3331.00px;top:1834.70px;font-family:'Liberation Mono', monospace;font-size:26.5px;line-height:26.5px;font-weight:400;color:#838c96;letter-spacing:0px;white-space:nowrap;transform:scaleX(0.8805031446540881);transform-origin:100% 0;-webkit-text-stroke:0.35px currentColor;">8</div><div style="position:absolute;left:132.50px;top:1834.70px;font-family:'Liberation Mono', monospace;font-size:26.5px;line-height:26.5px;font-weight:400;color:#04a5fb;letter-spacing:0px;white-space:nowrap;transform:scaleX(0.8805031446540881);transform-origin:0 0;-webkit-text-stroke:0.35px currentColor;">Gemnasium-636bc785-b40f-44a7-</div><div style="position:absolute;left:132.50px;top:1874.70px;font-family:'Liberation Mono', monospace;font-size:26.5px;line-height:26.5px;font-weight:400;color:#04a5fb;letter-spacing:0px;white-space:nowrap;transform:scaleX(0.8805031446540881);transform-origin:0 0;-webkit-text-stroke:0.35px currentColor;">9a71-115ea99adc9b</div><div style="position:absolute;left:638.30px;top:1834.70px;font-family:'Liberation Mono', monospace;font-size:26.5px;line-height:26.5px;font-weight:400;color:#04a5fb;letter-spacing:0px;white-space:nowrap;transform:scaleX(0.8805031446540881);transform-origin:0 0;-webkit-text-stroke:0.35px currentColor;">Spring Framework has Authorization Bypass for Case</div><div style="position:absolute;left:638.30px;top:1874.70px;font-family:'Liberation Mono', monospace;font-size:26.5px;line-height:26.5px;font-weight:400;color:#04a5fb;letter-spacing:0px;white-space:nowrap;transform:scaleX(0.8805031446540881);transform-origin:0 0;-webkit-text-stroke:0.35px currentColor;">Sensitive Comparisons</div><div style="position:absolute;right:1743.50px;top:1834.70px;font-family:'Liberation Mono', monospace;font-size:26.5px;line-height:26.5px;font-weight:400;color:#04a5fb;letter-spacing:0px;white-space:nowrap;transform:scaleX(0.8805031446540881);transform-origin:100% 0;-webkit-text-stroke:0.35px currentColor;">3</div><svg style="position:absolute;left:1706px;top:914px" width="1673" height="968"><rect x="472.60" y="102.00" width="2" height="780.10" fill="#33434a"/><rect x="615.65" y="102.00" width="2" height="780.10" fill="#33434a"/><rect x="758.70" y="102.00" width="2" height="780.10" fill="#33434a"/><rect x="901.75" y="102.00" width="2" height="780.10" fill="#33434a"/><rect x="1044.80" y="102.00" width="2" height="780.10" fill="#33434a"/><rect x="1187.85" y="102.00" width="2" height="780.10" fill="#33434a"/><rect x="1330.90" y="102.00" width="2" height="780.10" fill="#33434a"/><rect x="1473.95" y="102.00" width="2" height="780.10" fill="#33434a"/><rect x="330.00" y="106.86" width="690.84" height="76.2" fill="#b0575b"/><rect x="1020.84" y="106.86" width="5.72" height="76.2" fill="#ec9960"/><rect x="1026.55" y="106.86" width="342.96" height="76.2" fill="#52a585"/><text x="319.50" y="153.56" font-family="'Liberation Sans', sans-serif" font-size="24" fill="#fff" text-anchor="end">parasoft-integration</text><rect x="330.00" y="193.58" width="227.84" height="76.2" fill="#b0575b"/><rect x="557.84" y="193.58" width="5.72" height="76.2" fill="#ec9960"/><rect x="563.56" y="193.58" width="314.38" height="76.2" fill="#52a585"/><rect x="877.94" y="193.58" width="74.31" height="76.2" fill="#006d9c"/><text x="319.50" y="240.28" font-family="'Liberation Sans', sans-serif" font-size="24" fill="#fff" text-anchor="end">ultimate-workflow</text><rect x="330.00" y="280.31" width="79.22" height="76.2" fill="#b0575b"/><rect x="409.22" y="280.31" width="22.86" height="76.2" fill="#52a585"/><text x="319.50" y="327.01" font-family="'Liberation Sans', sans-serif" font-size="24" fill="#fff" text-anchor="end">jenkins-integration-demo</text><rect x="330.00" y="367.03" width="27.78" height="76.2" fill="#b0575b"/><rect x="357.78" y="367.03" width="5.72" height="76.2" fill="#52a585"/><rect x="363.50" y="367.03" width="5.72" height="76.2" fill="#006d9c"/><text x="319.50" y="413.73" font-family="'Liberation Sans', sans-serif" font-size="24" fill="#fff" text-anchor="end">tanuki-tech-inc</text><rect x="330.00" y="453.75" width="16.35" height="76.2" fill="#b0575b"/><rect x="346.35" y="453.75" width="11.43" height="76.2" fill="#006d9c"/><text x="319.50" y="500.45" font-family="'Liberation Sans', sans-serif" font-size="24" fill="#fff" text-anchor="end">premium-workflow</text><rect x="330.00" y="540.47" width="10.63" height="76.2" fill="#b0575b"/><rect x="340.63" y="540.47" width="5.72" height="76.2" fill="#006d9c"/><text x="319.50" y="587.17" font-family="'Liberation Sans', sans-serif" font-size="24" fill="#fff" text-anchor="end">sonarscanner-gradle-test</text><rect x="330.00" y="627.19" width="4.92" height="76.2" fill="#ec9960"/><rect x="334.92" y="627.19" width="5.72" height="76.2" fill="#52a585"/><rect x="340.63" y="627.19" width="5.72" height="76.2" fill="#006d9c"/><text x="319.50" y="673.89" font-family="'Liberation Sans', sans-serif" font-size="24" fill="#fff" text-anchor="end">trivy</text><rect x="330.00" y="713.92" width="10.63" height="76.2" fill="#ec9960"/><text x="319.50" y="760.62" font-family="'Liberation Sans', sans-serif" font-size="24" fill="#fff" text-anchor="end">python-web-ecs</text><rect x="330.00" y="800.64" width="4.92" height="76.2" fill="#52a585"/><text x="319.50" y="847.34" font-family="'Liberation Sans', sans-serif" font-size="24" fill="#fff" text-anchor="end">web-scraper</text><text x="675.02" y="157.16" font-family="'Liberation Sans', sans-serif" font-size="22" fill="#fff" text-anchor="middle">121</text><text x="1023.69" y="157.16" font-family="'Liberation Sans', sans-serif" font-size="22" fill="#fff" text-anchor="middle">1</text><text x="1198.03" y="157.16" font-family="'Liberation Sans', sans-serif" font-size="22" fill="#fff" text-anchor="middle">60</text><text x="443.52" y="243.88" font-family="'Liberation Sans', sans-serif" font-size="22" fill="#fff" text-anchor="middle">40</text><text x="560.70" y="243.88" font-family="'Liberation Sans', sans-serif" font-size="22" fill="#fff" text-anchor="middle">1</text><text x="720.75" y="243.88" font-family="'Liberation Sans', sans-serif" font-size="22" fill="#fff" text-anchor="middle">55</text><text x="915.09" y="243.88" font-family="'Liberation Sans', sans-serif" font-size="22" fill="#fff" text-anchor="middle">13</text><text x="369.21" y="330.61" font-family="'Liberation Sans', sans-serif" font-size="22" fill="#fff" text-anchor="middle">14</text><text x="420.66" y="330.61" font-family="'Liberation Sans', sans-serif" font-size="22" fill="#fff" text-anchor="middle">4</text><text x="343.49" y="417.33" font-family="'Liberation Sans', sans-serif" font-size="22" fill="#fff" text-anchor="middle">5</text><text x="360.64" y="417.33" font-family="'Liberation Sans', sans-serif" font-size="22" fill="#fff" text-anchor="middle">1</text><text x="366.35" y="417.33" font-family="'Liberation Sans', sans-serif" font-size="22" fill="#fff" text-anchor="middle">1</text><text x="337.77" y="504.05" font-family="'Liberation Sans', sans-serif" font-size="22" fill="#fff" text-anchor="middle">3</text><text x="352.06" y="504.05" font-family="'Liberation Sans', sans-serif" font-size="22" fill="#fff" text-anchor="middle">2</text><text x="334.92" y="590.77" font-family="'Liberation Sans', sans-serif" font-size="22" fill="#fff" text-anchor="middle">2</text><text x="343.49" y="590.77" font-family="'Liberation Sans', sans-serif" font-size="22" fill="#fff" text-anchor="middle">1</text><text x="332.06" y="677.49" font-family="'Liberation Sans', sans-serif" font-size="22" fill="#fff" text-anchor="middle">1</text><text x="337.77" y="677.49" font-family="'Liberation Sans', sans-serif" font-size="22" fill="#fff" text-anchor="middle">1</text><text x="343.49" y="677.49" font-family="'Liberation Sans', sans-serif" font-size="22" fill="#fff" text-anchor="middle">1</text><text x="334.92" y="764.22" font-family="'Liberation Sans', sans-serif" font-size="22" fill="#fff" text-anchor="middle">2</text><text x="332.06" y="850.94" font-family="'Liberation Sans', sans-serif" font-size="22" fill="#fff" text-anchor="middle">1</text><rect x="330.00" y="101.00" width="2" height="782.00" fill="#c9d0d7"/><rect x="320.00" y="101.00" width="11" height="2" fill="#c9d0d7"/><rect x="320.00" y="187.00" width="11" height="2" fill="#c9d0d7"/><rect x="320.00" y="274.00" width="11" height="2" fill="#c9d0d7"/><rect x="320.00" y="361.00" width="11" height="2" fill="#c9d0d7"/><rect x="320.00" y="447.00" width="11" height="2" fill="#c9d0d7"/><rect x="320.00" y="534.00" width="11" height="2" fill="#c9d0d7"/><rect x="320.00" y="621.00" width="11" height="2" fill="#c9d0d7"/><rect x="320.00" y="708.00" width="11" height="2" fill="#c9d0d7"/><rect x="320.00" y="794.00" width="11" height="2" fill="#c9d0d7"/><rect x="320.00" y="881.00" width="11" height="2" fill="#c9d0d7"/><text x="331.15" y="910.40" font-family="'Liberation Sans', sans-serif" font-size="22" fill="#fff" text-anchor="middle">0</text><text x="474.20" y="910.40" font-family="'Liberation Sans', sans-serif" font-size="22" fill="#fff" text-anchor="middle">25</text><text x="617.25" y="910.40" font-family="'Liberation Sans', sans-serif" font-size="22" fill="#fff" text-anchor="middle">50</text><text x="760.30" y="910.40" font-family="'Liberation Sans', sans-serif" font-size="22" fill="#fff" text-anchor="middle">75</text><text x="903.35" y="910.40" font-family="'Liberation Sans', sans-serif" font-size="22" fill="#fff" text-anchor="middle">100</text><text x="1046.40" y="910.40" font-family="'Liberation Sans', sans-serif" font-size="22" fill="#fff" text-anchor="middle">125</text><text x="1189.45" y="910.40" font-family="'Liberation Sans', sans-serif" font-size="22" fill="#fff" text-anchor="middle">150</text><text x="1332.50" y="910.40" font-family="'Liberation Sans', sans-serif" font-size="22" fill="#fff" text-anchor="middle">175</text><text x="903.00" y="946.50" font-family="'Liberation Sans', sans-serif" font-size="23" fill="#fff" text-anchor="middle">Count</text><text x="0" y="0" font-family="'Liberation Sans', sans-serif" font-size="23" fill="#fff" text-anchor="middle" transform="translate(40.50,491.80) rotate(-90)">Project Path</text><rect x="1494" y="480.00" width="31.3" height="24" fill="#006d9c"/><text x="1535.00" y="503.30" font-family="'Liberation Sans', sans-serif" font-size="23" fill="#fff" letter-spacing="-0.55">CRITICAL</text><rect x="1494" y="504.00" width="31.3" height="24" fill="#52a585"/><text x="1535.00" y="527.30" font-family="'Liberation Sans', sans-serif" font-size="23" fill="#fff" letter-spacing="-0.55">HIGH</text><rect x="1494" y="528.00" width="31.3" height="24" fill="#ec9960"/><text x="1535.00" y="551.30" font-family="'Liberation Sans', sans-serif" font-size="23" fill="#fff" letter-spacing="-0.55">LOW</text><rect x="1494" y="552.00" width="31.3" height="24" fill="#b0575b"/><text x="1535.00" y="575.30" font-family="'Liberation Sans', sans-serif" font-size="23" fill="#fff" letter-spacing="-0.55">MEDIUM</text></svg>
<script>(function(){var w=window.innerWidth;if(w&&Math.abs(w-3415)>4){document.body.style.zoom=(w/3415);}})();</script>
</body></html>
